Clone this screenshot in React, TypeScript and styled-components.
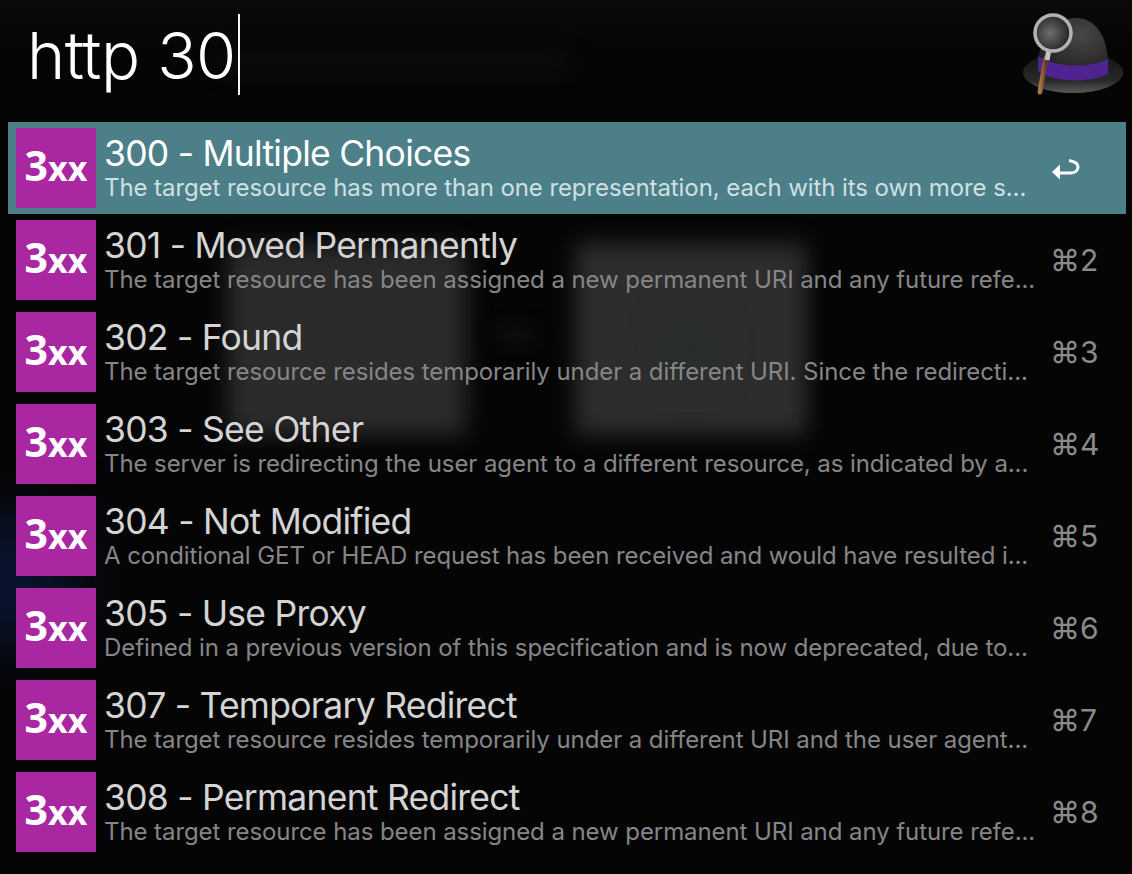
import React from "react";
import styled, { createGlobalStyle } from "styled-components";

const Global = createGlobalStyle`
  html, body { margin: 0; padding: 0; background: #050505; }
  #root { width: 1132px; height: 874px; overflow: hidden; }
`;

const Window = styled.div`
  position: relative;
  width: 1132px;
  height: 874px;
  overflow: hidden;
  background: linear-gradient(#0a0a0a 0, #060506 50px);
  font-family: Inter, "Noto Sans", sans-serif;
`;

const Backdrop = styled.div<{ $x: number; $y: number; $w: number; $h: number; $c: string; $b: number }>`
  position: absolute;
  left: ${(p) => p.$x}px;
  top: ${(p) => p.$y}px;
  width: ${(p) => p.$w}px;
  height: ${(p) => p.$h}px;
  background: ${(p) => p.$c};
  filter: blur(${(p) => p.$b}px);
  border-radius: 8px;
`;

const Content = styled.div`
  position: relative;
  display: flex;
  flex-direction: column;
`;

const SearchBar = styled.div`
  height: 122px;
  box-sizing: border-box;
  padding: 14px 8px 0 27px;
  display: flex;
  justify-content: space-between;
  align-items: flex-start;
`;

const Query = styled.div`
  display: flex;
  align-items: flex-start;
  height: 81px;
  font-family: Inter, sans-serif;
  font-weight: 300;
  font-size: 65px;
  line-height: 83px;
  letter-spacing: -0.55px;
  color: #fff;
`;

const Caret = styled.span`
  display: block;
  width: 2px;
  height: 81px;
  margin-left: 2px;
  background: #f4f4f4;
`;

const Hat = styled.svg`
  margin-top: -1px;
  flex: none;
`;

const List = styled.div`
  display: flex;
  flex-direction: column;
  padding: 0 6px 0 8px;
`;

const Row = styled.div<{ $selected?: boolean }>`
  height: 92px;
  box-sizing: border-box;
  padding: 6px 8px;
  display: flex;
  align-items: center;
  background: ${(p) => (p.$selected ? "#4c7f88" : "transparent")};
`;

const Badge = styled.div`
  flex: none;
  width: 80px;
  height: 80px;
  background: #a928a1;
  color: #fff;
  text-align: center;
  font-family: "Open Sans", sans-serif;
  font-weight: 700;
  line-height: 75px;
  white-space: nowrap;
`;

const BadgeDigit = styled.span`
  font-size: 41px;
`;

const BadgeSuffix = styled.span`
  font-size: 34px;
`;

const Texts = styled.div`
  flex: 1;
  min-width: 0;
  margin-left: 8px;
  display: flex;
  flex-direction: column;
`;

const Title = styled.div<{ $selected?: boolean }>`
  font-size: 35.5px;
  line-height: 40px;
  height: 39px;
  font-weight: 400;
  letter-spacing: -0.75px;
  white-space: nowrap;
  color: ${(p) => (p.$selected ? "#ffffff" : "#d4d4d4")};
`;

const Subtitle = styled.div<{ $selected?: boolean }>`
  font-size: 24px;
  line-height: 30px;
  height: 30px;
  width: 930px;
  font-weight: 400;
  letter-spacing: -0.08px;
  white-space: nowrap;
  color: ${(p) => (p.$selected ? "#cfe0e3" : "#868686")};
`;

const Shortcut = styled.div`
  flex: none;
  width: 84px;
  box-sizing: border-box;
  padding-left: 16px;
  display: flex;
  justify-content: flex-start;
  font-size: 30px;
  line-height: 40px;
  letter-spacing: 0;
  color: #8a8a8a;
  margin-top: -1px;
  font-family: Inter, "DejaVu Sans", sans-serif;
`;

const ReturnGlyph = styled.svg`
  margin-top: 4px;
  margin-left: 2px;
`;

const rows = [
  ["300 - Multiple Choices", "The target resource has more than one representation, each with its own more s..."],
  ["301 - Moved Permanently", "The target resource has been assigned a new permanent URI and any future refe..."],
  ["302 - Found", "The target resource resides temporarily under a different URI. Since the redirecti..."],
  ["303 - See Other", "The server is redirecting the user agent to a different resource, as indicated by a..."],
  ["304 - Not Modified", "A conditional GET or HEAD request has been received and would have resulted i..."],
  ["305 - Use Proxy", "Defined in a previous version of this specification and is now deprecated, due to..."],
  ["307 - Temporary Redirect", "The target resource resides temporarily under a different URI and the user agent..."],
  ["308 - Permanent Redirect", "The target resource has been assigned a new permanent URI and any future refe..."],
];

const HatIcon = () => (
  <Hat width="104" height="96" viewBox="0 0 104 96">
    <defs>
      <radialGradient id="crown" cx="0.62" cy="0.28" r="0.75">
        <stop offset="0" stopColor="#484646" />
        <stop offset="1" stopColor="#1f1e1e" />
      </radialGradient>
      <linearGradient id="brim" x1="0" y1="0" x2="0" y2="1">
        <stop offset="0" stopColor="#141313" />
        <stop offset="0.7" stopColor="#2a2929" />
        <stop offset="1" stopColor="#5a5858" />
      </linearGradient>
      <radialGradient id="lens" cx="0.42" cy="0.5" r="0.55">
        <stop offset="0" stopColor="#6e6e6e" />
        <stop offset="1" stopColor="#242424" />
      </radialGradient>
      <linearGradient id="stick" x1="0" y1="0" x2="1" y2="0">
        <stop offset="0" stopColor="#a87748" />
        <stop offset="1" stopColor="#5a3d24" />
      </linearGradient>
    </defs>
    <ellipse cx="53" cy="59.5" rx="50" ry="20.5" fill="url(#brim)" />
    <path d="M18 50 C19 22 38 5 56 5 C76 5 88 24 88 52 C70 70 34 70 18 50 Z" fill="url(#crown)" />
    <path d="M18 43 C32 53 66 57 88 46 L88 61 C68 71 32 69 18 58 Z" fill="#4f2390" />
    <path d="M26 45 L20 79" stroke="url(#stick)" strokeWidth="5" strokeLinecap="round" />
    <path d="M29 36 L27 47" stroke="#c4c4c4" strokeWidth="5" />
    <circle cx="33" cy="20" r="18" fill="url(#lens)" stroke="#b2b2b2" strokeWidth="3.5" />
  </Hat>
);

const ReturnIcon = () => (
  <ReturnGlyph width="28" height="22" viewBox="0 0 28 22">
    <path d="M7 14 H18 C23 14 26 11.5 26 8 C26 5 23 2.5 17 1.5" fill="none" stroke="#fff" strokeWidth="3" />
    <path d="M0 13 L8 5.5 V20.5 Z" fill="#fff" />
  </ReturnGlyph>
);

export default function App() {
  return (
    <Window>
      <Global />
      <Backdrop $x={228} $y={245} $w={238} $h={190} $c="#2b2b2b" $b={11} />
      <Backdrop $x={575} $y={243} $w={232} $h={192} $c="#2d2d2d" $b={11} />
      <Backdrop $x={665} $y={320} $w={50} $h={60} $c="#282e2c" $b={16} />
      <Backdrop $x={495} $y={325} $w={40} $h={20} $c="#0e0e0e" $b={8} />
      <Backdrop $x={220} $y={52} $w={350} $h={20} $c="#0d0d0d" $b={10} />
      <Backdrop $x={-60} $y={520} $w={130} $h={120} $c="#0a1430" $b={30} />
      <Content>
        <SearchBar>
          <Query>
            http 30
            <Caret />
          </Query>
          <HatIcon />
        </SearchBar>
        <List>
          {rows.map(([t, s], i) => (
            <Row key={t} $selected={i === 0}>
              <Badge>
                <BadgeDigit>3</BadgeDigit>
                <BadgeSuffix>xx</BadgeSuffix>
              </Badge>
              <Texts>
                <Title $selected={i === 0}>{t}</Title>
                <Subtitle $selected={i === 0}>{s}</Subtitle>
              </Texts>
              <Shortcut>{i === 0 ? <ReturnIcon /> : `⌘${i + 1}`}</Shortcut>
            </Row>
          ))}
        </List>
      </Content>
    </Window>
  );
}
